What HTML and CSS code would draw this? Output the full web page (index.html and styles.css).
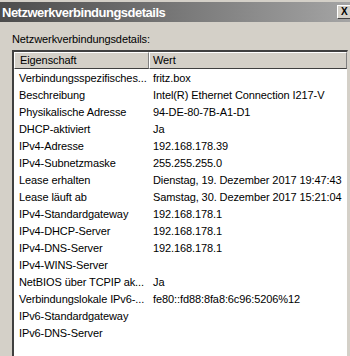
FILE: index.html
```html
<!DOCTYPE html>
<html>
<head>
<meta charset="utf-8">
<link rel="stylesheet" href="styles.css">
</head>
<body>
<div class="window">
  <div class="titlebar">
    <span class="title">Netzwerkverbindungsdetails</span>
    <span class="close">X</span>
  </div>
  <div class="content">
    <div class="label">Netzwerkverbindungsdetails:</div>
    <div class="list">
      <div class="header">
        <div class="hcell">Eigenschaft</div>
        <div class="hcell">Wert</div>
      </div>
      <div class="rows">
        <div class="row"><span class="k">Verbindungsspezifisches...</span><span class="v">fritz.box</span></div>
        <div class="row"><span class="k">Beschreibung</span><span class="v">Intel(R) Ethernet Connection I217-V</span></div>
        <div class="row"><span class="k">Physikalische Adresse</span><span class="v">94-DE-80-7B-A1-D1</span></div>
        <div class="row"><span class="k">DHCP-aktiviert</span><span class="v">Ja</span></div>
        <div class="row"><span class="k">IPv4-Adresse</span><span class="v">192.168.178.39</span></div>
        <div class="row"><span class="k">IPv4-Subnetzmaske</span><span class="v">255.255.255.0</span></div>
        <div class="row"><span class="k">Lease erhalten</span><span class="v">Dienstag, 19. Dezember 2017 19:47:43</span></div>
        <div class="row"><span class="k">Lease läuft ab</span><span class="v">Samstag, 30. Dezember 2017 15:21:04</span></div>
        <div class="row"><span class="k">IPv4-Standardgateway</span><span class="v">192.168.178.1</span></div>
        <div class="row"><span class="k">IPv4-DHCP-Server</span><span class="v">192.168.178.1</span></div>
        <div class="row"><span class="k">IPv4-DNS-Server</span><span class="v">192.168.178.1</span></div>
        <div class="row"><span class="k">IPv4-WINS-Server</span><span class="v"></span></div>
        <div class="row"><span class="k">NetBIOS über TCPIP ak...</span><span class="v">Ja</span></div>
        <div class="row"><span class="k">Verbindungslokale IPv6-...</span><span class="v">fe80::fd88:8fa8:6c96:5206%12</span></div>
        <div class="row"><span class="k">IPv6-Standardgateway</span><span class="v"></span></div>
        <div class="row"><span class="k">IPv6-DNS-Server</span><span class="v"></span></div>
      </div>
    </div>
  </div>
</div>
</body>
</html>
```

FILE: styles.css
```css
html, body {
  margin: 0;
  padding: 0;
  background: #d4d0c8;
}
.window {
  width: 350px;
  height: 356px;
  overflow: hidden;
  background: #d4d0c8;
  font-family: "Liberation Sans", Arial, sans-serif;
  font-size: 11px;
  letter-spacing: -0.1px;
  color: #000;
}
.titlebar {
  margin-top: 2px;
  height: 20px;
  display: flex;
  align-items: center;
  justify-content: space-between;
  background: linear-gradient(to right, #4c4c4c, #6e6e6e 40%, #a4a4a4);
  padding-left: 2px;
}
.title {
  color: #fff;
  font-weight: bold;
  font-size: 13px;
  letter-spacing: -0.5px;
}
.close {
  width: 16px;
  height: 12px;
  margin-right: -8px;
  background: #d4d0c8;
  border: 1px solid;
  border-color: #fff #404040 #404040 #fff;
  font-size: 10px;
  font-weight: bold;
  line-height: 12px;
  padding-left: 3px;
  box-sizing: content-box;
}
.content {
  padding: 9px 2px 0 12px;
}
.label {
  height: 17px;
  line-height: 17px;
}
.list {
  margin-top: 2px;
  background: #fff;
  border-top: 2px solid #404040;
  border-left: 2px solid #404040;
  border-right: 1px solid #d4d0c8;
  height: 320px;
}
.header {
  display: grid;
  grid-template-columns: 135px 1fr;
  height: 17px;
}
.hcell {
  background: #d4d0c8;
  border-top: 1px solid #fff;
  border-left: 1px solid #fff;
  border-right: 1px solid #808080;
  border-bottom: 1px solid #404040;
  line-height: 15px;
  padding-left: 5px;
}
.hcell + .hcell {
  padding-left: 3px;
}
.rows {
  padding-top: 1px;
}
.row {
  display: grid;
  grid-template-columns: 135px 1fr;
  height: 17px;
  line-height: 17px;
  white-space: nowrap;
}
.k {
  padding-left: 5px;
}
.v {
  padding-left: 4px;
}
```
